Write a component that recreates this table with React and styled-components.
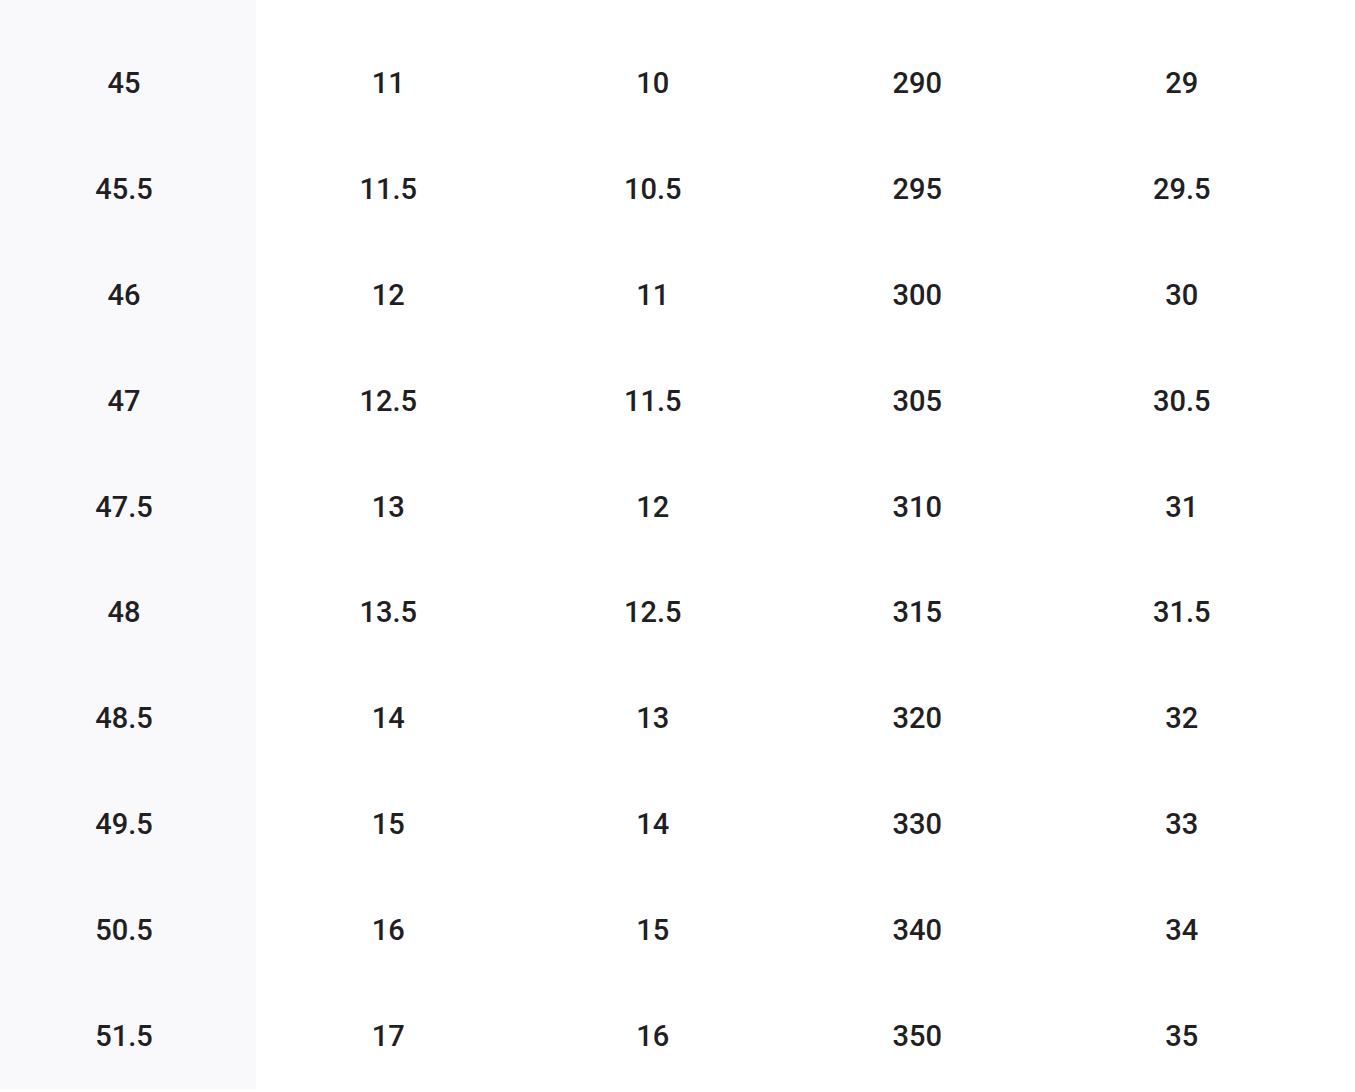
import styled, { createGlobalStyle } from 'styled-components'

const GlobalStyle = createGlobalStyle`
  html, body {
    margin: 0;
    padding: 0;
    background: #ffffff;
  }
  body {
    font-family: Roboto, "Noto Sans", "Liberation Sans", sans-serif;
    color: #1f2024;
    overflow: hidden;
  }
`

const Table = styled.div`
  display: grid;
  grid-template-columns: 256px repeat(4, 264.5px);
  grid-auto-rows: 105.9px;
  grid-template-rows: 30px;
  width: 1314px;
`

const Cell = styled.div`
  display: flex;
  align-items: center;
  justify-content: center;
  font-size: 29px;
  font-weight: 500;
  letter-spacing: 0;
  background: ${(p) => (p.$head ? '#f9f9fb' : 'transparent')};
  padding-right: ${(p) => (p.$head ? '8px' : '0')};
`

const rows = [
  ['45', '11', '10', '290', '29'],
  ['45.5', '11.5', '10.5', '295', '29.5'],
  ['46', '12', '11', '300', '30'],
  ['47', '12.5', '11.5', '305', '30.5'],
  ['47.5', '13', '12', '310', '31'],
  ['48', '13.5', '12.5', '315', '31.5'],
  ['48.5', '14', '13', '320', '32'],
  ['49.5', '15', '14', '330', '33'],
  ['50.5', '16', '15', '340', '34'],
  ['51.5', '17', '16', '350', '35'],
]

const App = () => {
  return (
    <>
      <GlobalStyle />
      <Table>
        {/* tail of the row above, scrolled off */}
        {[0, 1, 2, 3, 4].map((i) => (
          <Cell key={`top-${i}`} $head={i === 0} />
        ))}
        {rows.map((row, r) =>
          row.map((val, i) => (
            <Cell key={`${r}-${i}`} $head={i === 0}>
              {val}
            </Cell>
          ))
        )}
      </Table>
    </>
  )
}

export default App
